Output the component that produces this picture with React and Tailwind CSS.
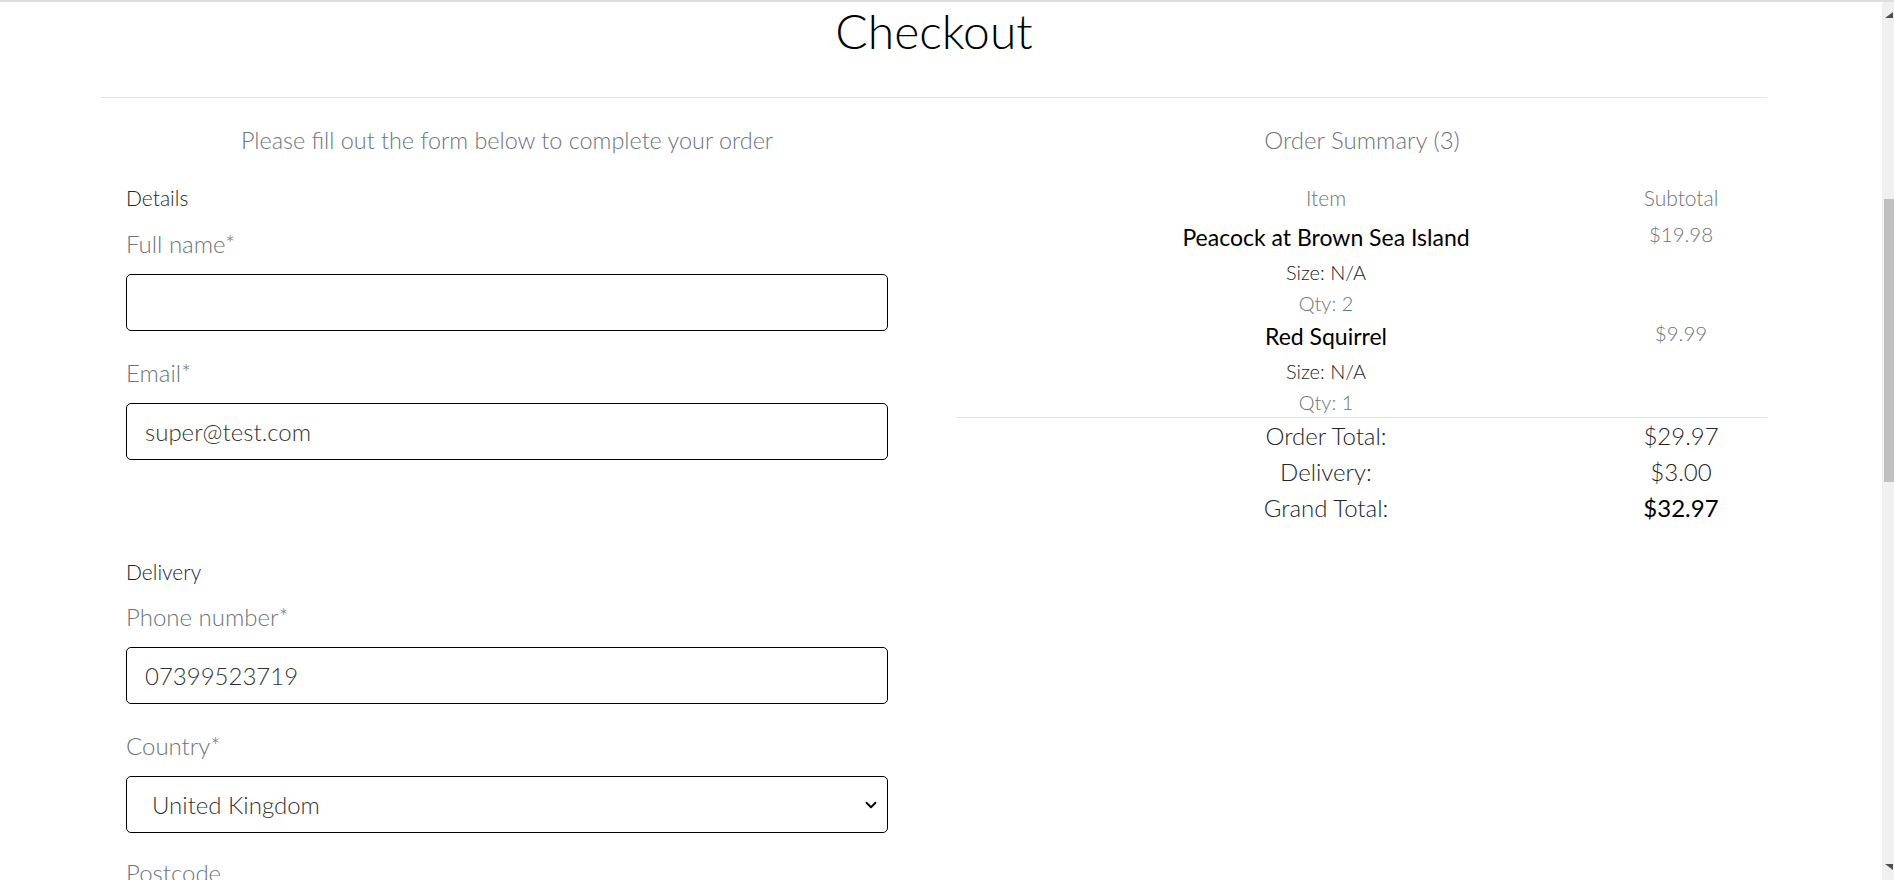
import React from "react";

const font = { fontFamily: "Lato, 'Open Sans', sans-serif" };

function Field({ label, value, mt, select }) {
  return (
    <>
      <div className={`${mt} text-[24px] leading-[30px] font-light text-[#6c757d]`}>{label}</div>
      <div className="mt-[15px] h-[57px] rounded-[5px] border border-black flex items-center justify-between">
        <span className={`${select ? "pl-[25px]" : "pl-[18px]"} text-[#333333] text-[24px] font-light`}>{value}</span>
        {select && (
          <svg className="mr-[10px]" width="12" height="12" viewBox="0 0 16 16" fill="none" stroke="black" strokeWidth="2.4" strokeLinecap="round" strokeLinejoin="round">
            <path d="M2 5l6 6 6-6" />
          </svg>
        )}
      </div>
    </>
  );
}

function Line({ left, right, strong }) {
  return (
    <div className="grid grid-cols-[164px_410px_70px_160px] h-[36px] items-center text-[24px] font-light text-[#212529]">
      <div />
      <div className="text-center">{left}</div>
      <div />
      <div className={`text-center ${strong ? "font-normal text-black" : ""}`}>{right}</div>
    </div>
  );
}

function Item({ title, price, qty, mt }) {
  return (
    <div className={`grid grid-cols-[164px_410px_70px_160px] ${mt}`}>
      <div />
      <div className="text-center">
        <div className="text-[23px] leading-[32px] font-normal text-black">{title}</div>
        <div className="mt-[3px] text-[20px] leading-[32px] font-light text-[#212529]">Size: N/A</div>
        <div className="text-[20px] leading-[30px] font-light text-[#6c757d]">Qty: {qty}</div>
      </div>
      <div />
      <div className="text-center text-[20.5px] leading-[26px] font-light text-[#6c757d]">{price}</div>
    </div>
  );
}

export default function App() {
  return (
    <div style={font} className="w-[1894px] h-[880px] overflow-hidden bg-white flex flex-col">
      <div className="h-[2px] bg-[#dedede] shrink-0" />
      <div className="flex flex-1 min-h-0">
        <div className="flex-1 min-w-0">
          <div className="ml-[101px] w-[1666px]">
            <h2 className="pt-[1px] text-center text-[48px] leading-[56px] font-light text-black">Checkout</h2>
            <div className="mt-[38px] h-px bg-[#e5e5e5]" />
            <div className="pl-[25px] grid grid-cols-[762px_810px] gap-x-[69px]">
              <div className="flex flex-col">
                <div className="mt-[27px] text-center text-[23.4px] leading-[30px] font-light text-[#6c757d]">
                  Please fill out the form below to complete your order
                </div>
                <div className="mt-[31px] text-[21px] leading-[24px] font-light text-[#212529]">Details</div>
                <Field label="Full name*" value="" mt="mt-[19px]" />
                <Field label="Email*" value="super@test.com" mt="mt-[27px]" />
                <div className="mt-[100px] text-[21px] leading-[24px] font-light text-[#212529]">Delivery</div>
                <Field label="Phone number*" value="07399523719" mt="mt-[18px]" />
                <Field label="Country*" value="United Kingdom" mt="mt-[27px]" select />
                <div className="mt-[25px] text-[24px] leading-[30px] font-light text-[#6c757d]">Postcode</div>
              </div>
              <div className="flex flex-col">
                <div className="mt-[27px] text-center text-[24px] leading-[30px] font-light text-[#6c757d]">
                  Order Summary (3)
                </div>
                <div className="mt-[31px] grid grid-cols-[164px_410px_70px_160px] text-[21px] leading-[24px] font-light text-[#6c757d]">
                  <div />
                  <div className="text-center">Item</div>
                  <div />
                  <div className="text-center">Subtotal</div>
                </div>
                <div className="mt-[11px]">
                  <Item mt="" title="Peacock at Brown Sea Island" price="$19.98" qty="2" />
                  <Item mt="mt-[2px]" title="Red Squirrel" price="$9.99" qty="1" />
                </div>
                <div className="h-px bg-[#dee2e6]" />
                <Line left="Order Total:" right="$29.97" />
                <Line left="Delivery:" right="$3.00" />
                <Line left="Grand Total:" right="$32.97" strong />
              </div>
            </div>
          </div>
        </div>
        <div className="w-[12px] shrink-0 bg-[#f0f0f0] flex flex-col items-end">
          <div className="h-[10px]" />
          <svg width="8" height="6" viewBox="0 0 8 6" className="mr-[1px]">
            <path d="M8 0 L8 6 L0 6 Z" fill="#505050" />
          </svg>
          <div className="mt-[181px] w-[10px] h-[283px] bg-[#c1c1c1]" />
          <div className="flex-1" />
          <svg width="8" height="6" viewBox="0 0 8 6" className="mr-[1px] mb-[10px]">
            <path d="M0 0 L8 0 L8 6 Z" fill="#505050" />
          </svg>
        </div>
      </div>
    </div>
  );
}
